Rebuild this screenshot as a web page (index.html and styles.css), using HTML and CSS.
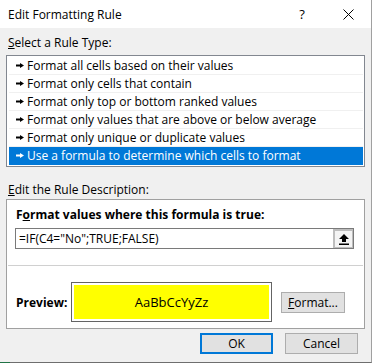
FILE: index.html
```html
<!DOCTYPE html>
<html lang="en">
<head>
    <meta charset="UTF-8">
    <meta name="viewport" content="width=device-width, initial-scale=1.0">
    <title>Edit Formatting Rule</title>
    <link rel="stylesheet" href="styles.css">
</head>
<body>
    <div class="dialog">
        <div class="titlebar">
            <div class="title">Edit Formatting Rule</div>
            <div class="caption-btn">?</div>
            <div class="caption-btn">
                <svg width="11" height="11" viewBox="0 0 11 11"><path d="M0.5 0.5 L10.5 10.5 M10.5 0.5 L0.5 10.5" stroke="#000" stroke-width="1" fill="none"/></svg>
            </div>
        </div>
        <div class="content">
            <div class="label"><u>S</u>elect a Rule Type:</div>
            <div class="rule-list">
                <div class="rule-item"><svg class="marker" width="8" height="5" viewBox="0 0 8 5"><path d="M0 1.5 H4 V0 L8 2.5 L4 5 V3.5 H0 Z"/></svg>Format all cells based on their values</div>
                <div class="rule-item"><svg class="marker" width="8" height="5" viewBox="0 0 8 5"><path d="M0 1.5 H4 V0 L8 2.5 L4 5 V3.5 H0 Z"/></svg>Format only cells that contain</div>
                <div class="rule-item"><svg class="marker" width="8" height="5" viewBox="0 0 8 5"><path d="M0 1.5 H4 V0 L8 2.5 L4 5 V3.5 H0 Z"/></svg>Format only top or bottom ranked values</div>
                <div class="rule-item"><svg class="marker" width="8" height="5" viewBox="0 0 8 5"><path d="M0 1.5 H4 V0 L8 2.5 L4 5 V3.5 H0 Z"/></svg>Format only values that are above or below average</div>
                <div class="rule-item"><svg class="marker" width="8" height="5" viewBox="0 0 8 5"><path d="M0 1.5 H4 V0 L8 2.5 L4 5 V3.5 H0 Z"/></svg>Format only unique or duplicate values</div>
                <div class="rule-item selected"><svg class="marker" width="8" height="5" viewBox="0 0 8 5"><path d="M0 1.5 H4 V0 L8 2.5 L4 5 V3.5 H0 Z"/></svg>Use a formula to determine which cells to format</div>
            </div>

            <div class="label label-desc"><u>E</u>dit the Rule Description:</div>
            <div class="desc-box">
                <div class="desc-title">F<u>o</u>rmat values where this formula is true:</div>
                <div class="formula">
                    <div class="formula-text">=IF(C4="No";TRUE;FALSE)</div>
                    <div class="ref-btn">
                        <svg width="10" height="11" viewBox="0 0 10 11"><path d="M5 0 L10 5 H7 V8 H3 V5 H0 Z"/><rect x="0" y="9.5" width="10" height="1.5"/></svg>
                    </div>
                </div>
                <div class="separator"></div>
                <div class="preview-row">
                    <div class="preview-label">Preview:</div>
                    <div class="preview-box"><div class="preview-sample">AaBbCcYyZz</div></div>
                    <div class="btn btn-format"><u>F</u>ormat...</div>
                </div>
            </div>

            <div class="footer">
                <div class="btn btn-ok">OK</div>
                <div class="btn">Cancel</div>
            </div>
        </div>
    </div>
</body>
</html>
```

FILE: styles.css
```css
html, body { margin: 0; padding: 0; }
body { background-color: #fff; font-family: "Open Sans", "Noto Sans", sans-serif; font-size: 12px; color: #000; }

/* dialog frame */
.dialog {
width: 371px;
height: 362px;
background-color: #f0f0f0;
border-right: 1px solid #a0a0a0;
border-bottom: 1px solid #6e6e6e;
display: flex;
flex-direction: column;
position: relative;
}
.dialog::after { content: ""; position: absolute; left: 0; bottom: -1px; width: 10px; height: 1px; background-color: #217346; }

.titlebar { height: 28px; background-color: #fff; display: flex; align-items: center; padding-left: 8px; }
.title { flex: 1; font-size: 12px; }
.caption-btn { width: 46px; height: 28px; display: flex; align-items: center; justify-content: center; font-size: 13px; }

.content { padding: 0 6px; display: flex; flex-direction: column; }
.label { line-height: 16px; margin-top: 7px; padding-left: 2px; }
.label-desc { margin-top: 15px; }

/* rule type list */
.rule-list { margin-top: 4px; border: 1px solid #828790; background-color: #fff; padding: 1px 1px 1px 2px; }
.rule-item { height: 17px; border-bottom: 1px solid #f0f0f0; display: flex; align-items: center; padding-left: 7px; white-space: nowrap; }
.rule-item .marker { fill: #000; margin-right: 3px; flex: none; }
.rule-item.selected { background-color: #0078d7; border-bottom-color: #0078d7; color: #fff; }
.rule-item.selected .marker { fill: #fff; }

/* rule description */
.desc-box { margin-top: 1px; height: 128px; border: 1px solid #a0a0a0; background-color: #fff; padding: 0 10px 0 8px; }
.desc-title { font-weight: bold; line-height: 16px; margin-top: 7px; padding-left: 1px; }
.formula { margin-top: 5px; height: 19px; border: 1px solid #7a7a7a; display: flex; align-items: center; }
.formula-text { flex: 1; padding-left: 3px; }
.ref-btn { width: 17px; height: 16px; border: 2px solid #bdbdbd; border-right-width: 1px; border-bottom-width: 1px; background-color: #f4f4f4; display: flex; align-items: center; justify-content: center; }
.separator { height: 1px; background-color: #d0d0d0; margin: 16px -9px 0 -7px; }

.preview-row { margin-top: 16px; display: flex; align-items: center; }
.preview-label { font-weight: bold; width: 55px; padding-left: 1px; }
.preview-box { width: 195px; height: 34px; border: 1px solid #646464; padding: 2px; background-color: #fff; }
.preview-sample { height: 100%; background-color: #ffff00; display: flex; align-items: center; justify-content: center; font-size: 13px; }

.btn { height: 19px; border: 1px solid #adadad; background-color: #e1e1e1; display: flex; align-items: center; justify-content: center; }
.btn-format { width: 62px; margin-left: 9px; }

.footer { margin-top: 4px; display: flex; justify-content: flex-end; gap: 12px; padding-right: 7px; }
.footer .btn { width: 71px; }
.footer .btn-ok { border: 2px solid #0078d7; width: 69px; height: 17px; }
```
